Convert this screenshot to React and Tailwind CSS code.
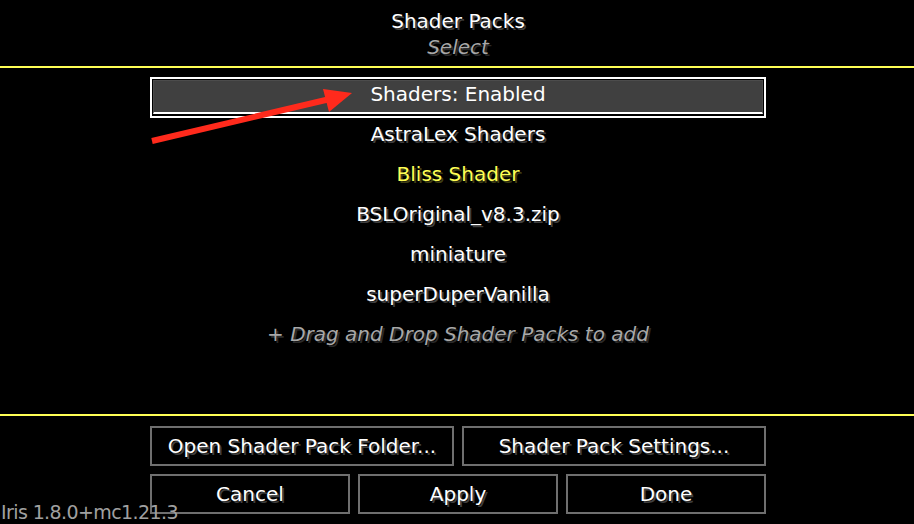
import React from 'react';

const packs = [
  { name: 'AstraLex Shaders' },
  { name: 'Bliss Shader', active: true },
  { name: 'BSLOriginal_v8.3.zip' },
  { name: 'miniature' },
  { name: 'superDuperVanilla' },
];

const shadow = '[text-shadow:2px_2px_0_#3f3f3f]';

const McButton = ({ label, width }) => (
  <div className={"h-[40px] border-2 border-[#6f6f6f] bg-black flex items-center justify-center text-white " + shadow + " " + width}>
    {label}
  </div>
);

const App = () => {
  return (
    <div className="relative w-[914px] h-[524px] overflow-hidden bg-black font-['DejaVu_Sans',sans-serif] text-[20px] leading-[20px]">
      {/* Header */}
      <div className="h-[66px] flex flex-col items-center pl-[2px] pt-[11px]">
        <div className={"text-white " + shadow}>Shader Packs</div>
        <div className="mt-[6px] italic text-[#a8a8a8] [text-shadow:2px_2px_0_#2a2a2a]">Select</div>
      </div>
      <div className="h-[2px] bg-[#ffff55]" />

      {/* Shader pack list */}
      <div className="h-[346px] pt-[9px] pl-[2px] flex flex-col items-center">
        <div className="w-[616px] h-[41px] border-2 border-white bg-black pt-px px-px pb-[2px]">
          <div className={"h-[34px] bg-[#404040] border border-[#4c4c4c] border-b-2 border-b-white flex justify-center pt-[3px] text-white " + shadow}>
            Shaders: Enabled
          </div>
        </div>
        {packs.map((p) => (
          <div key={p.name} className={"w-[616px] h-[40px] flex justify-center pt-[6px] " + (p.active ? "text-[#ffff55] [text-shadow:2px_2px_0_#3f3f15]" : "text-white " + shadow)}>
            {p.name}
          </div>
        ))}
        <div className="w-[616px] h-[40px] flex justify-center pt-[6px] italic text-[#a8a8a8] [text-shadow:2px_2px_0_#2a2a2a]">
          + Drag and Drop Shader Packs to add
        </div>
      </div>
      <div className="h-[2px] bg-[#ffff55]" />

      {/* Buttons */}
      <div className="pt-[10px] pl-[2px] flex flex-col items-center gap-[8px]">
        <div className="flex gap-[8px]">
          <McButton label="Open Shader Pack Folder..." width="w-[304px]" />
          <McButton label="Shader Pack Settings..." width="w-[304px]" />
        </div>
        <div className="flex gap-[8px]">
          <McButton label="Cancel" width="w-[200px]" />
          <McButton label="Apply" width="w-[200px]" />
          <McButton label="Done" width="w-[200px]" />
        </div>
      </div>

      {/* Version overlay */}
      <div className="absolute left-[1px] top-[504px] text-[19px] leading-[16px] text-[#a0a0a0] tracking-[-0.6px]">Iris 1.8.0+mc1.21.3</div>

      {/* Red annotation arrow */}
      <svg className="absolute inset-0 pointer-events-none" width="914" height="524" viewBox="0 0 914 524">
        <line x1="152" y1="141" x2="330" y2="99" stroke="#ff2a1c" strokeWidth="6" />
        <polygon points="352,93 323,89 329,112" fill="#ff2a1c" />
      </svg>
    </div>
  );
};

export default App;
